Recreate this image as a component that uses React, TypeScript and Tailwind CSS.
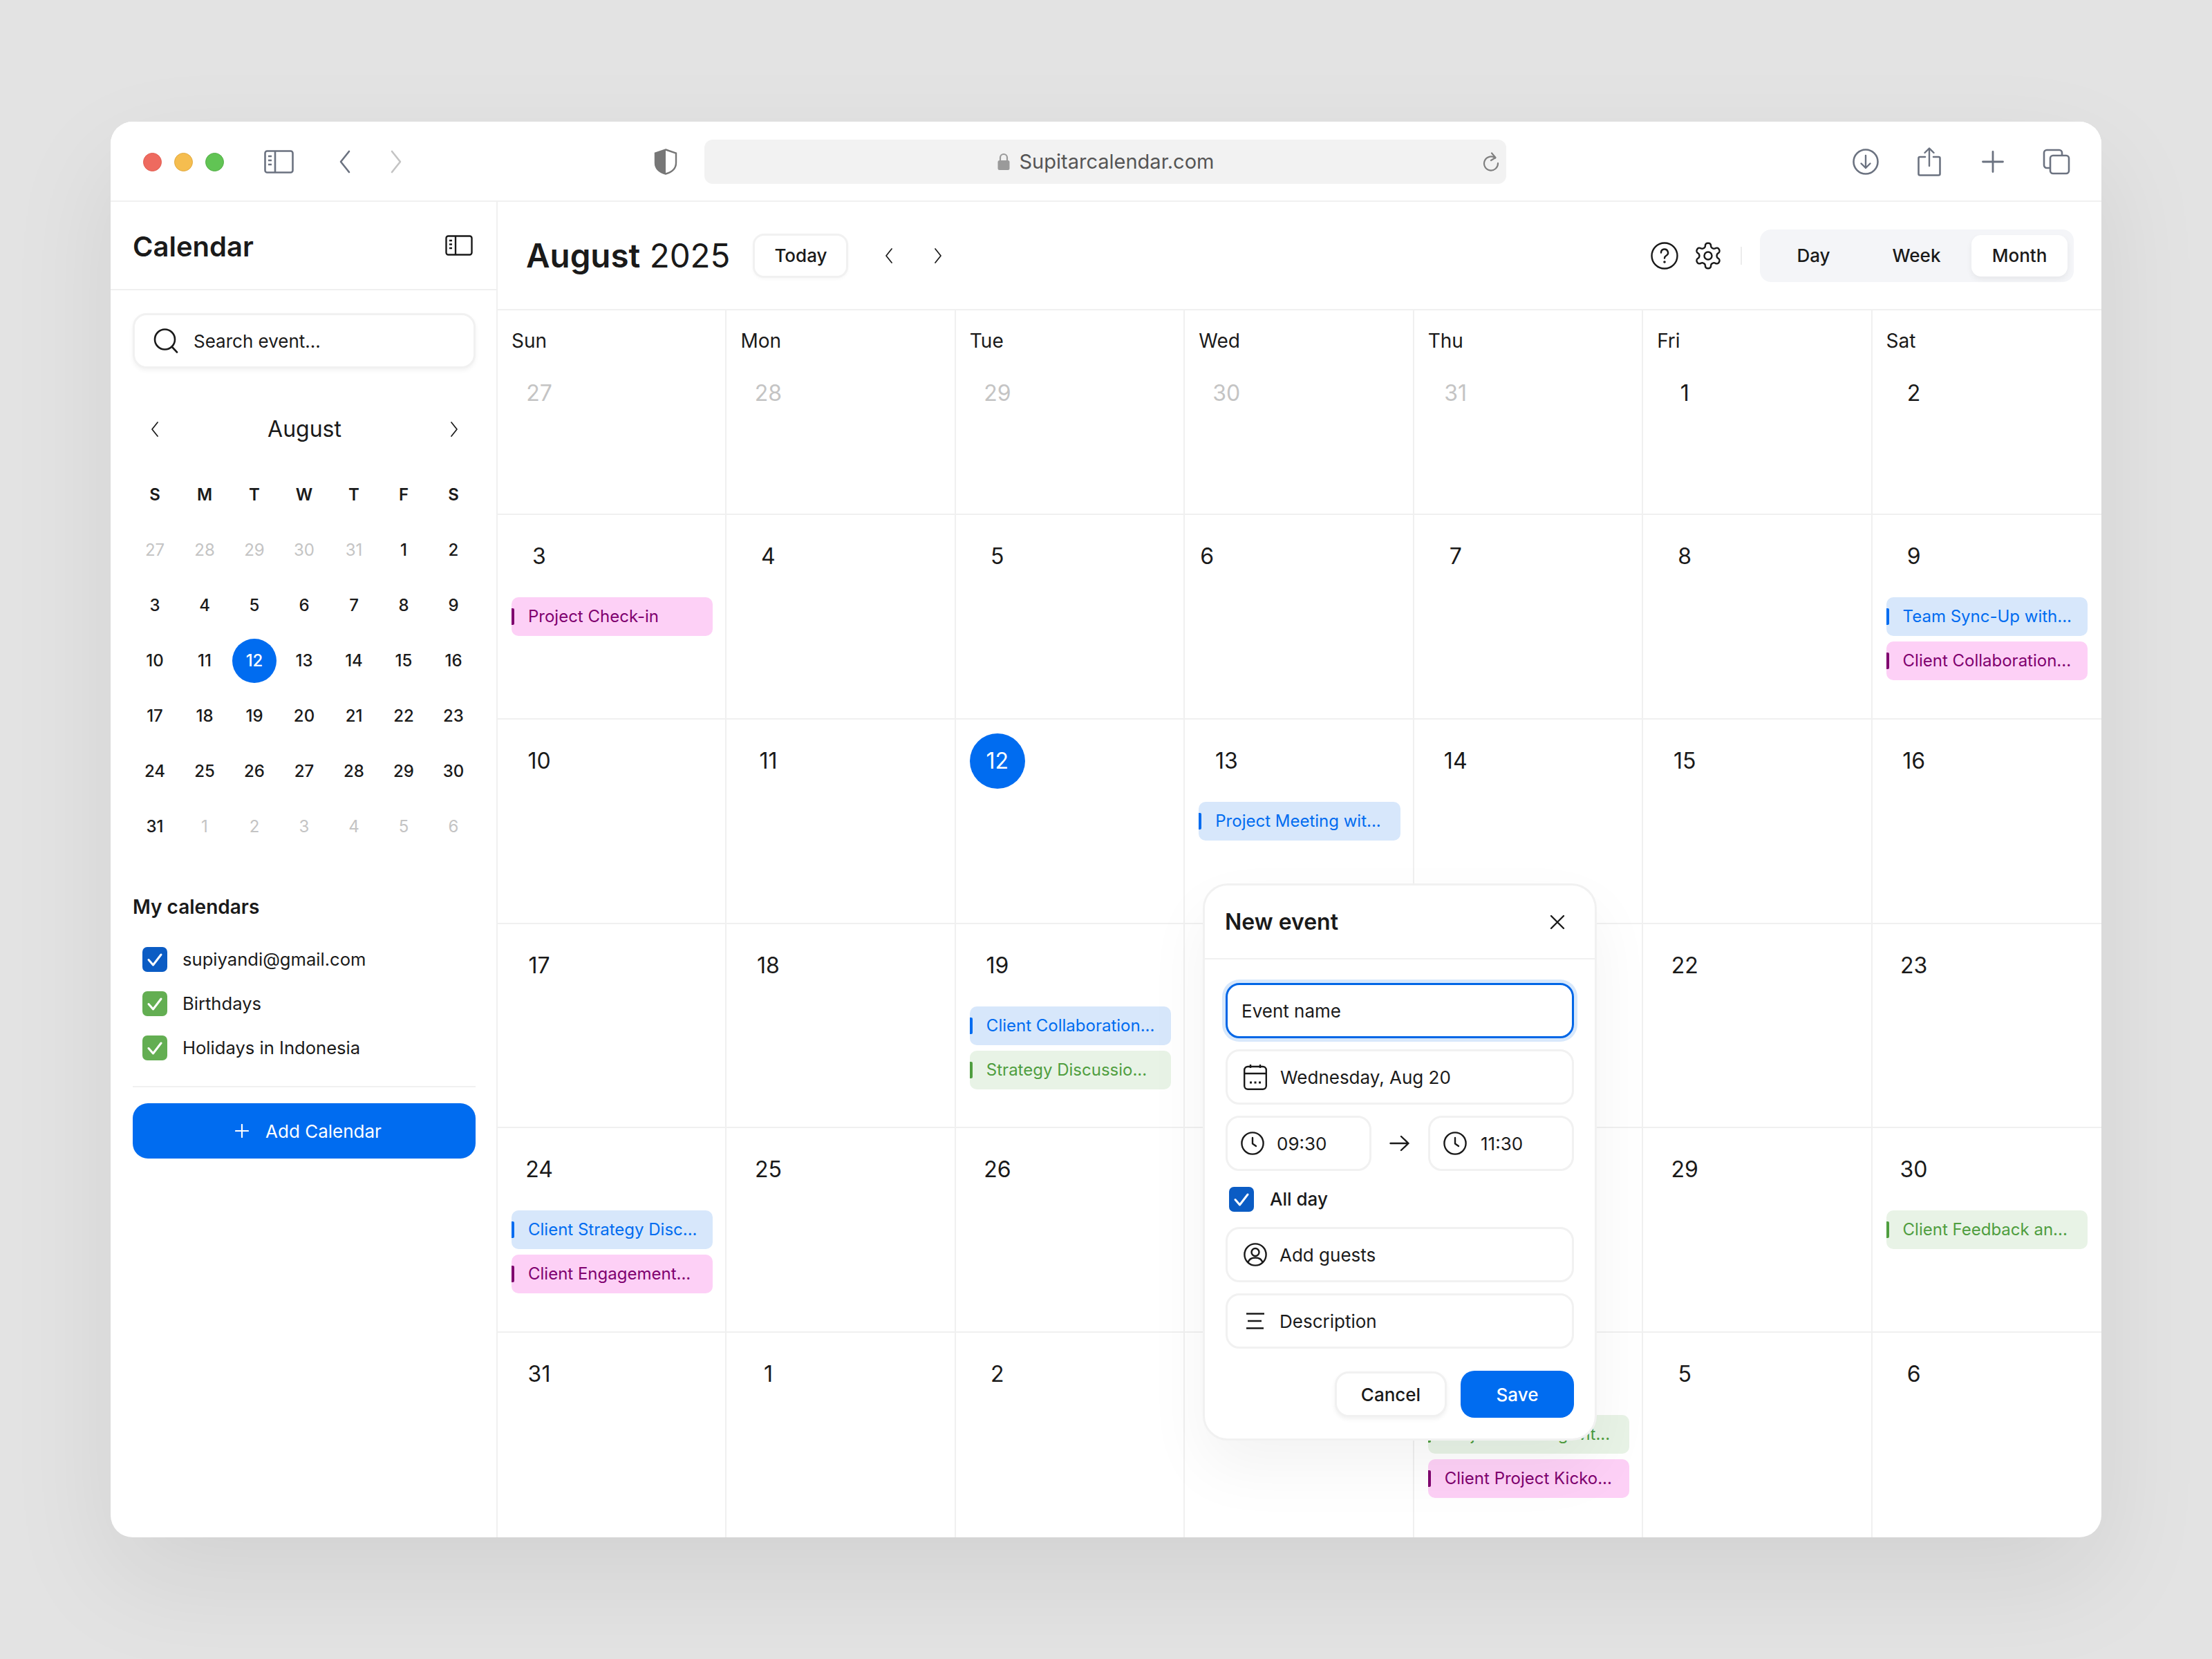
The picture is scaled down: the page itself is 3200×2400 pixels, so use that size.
import { ReactNode } from 'react';

type Tone = 'blue' | 'pink' | 'green';

interface Chip {
  label: string;
  tone: Tone;
}

interface Cell {
  day: number;
  muted?: boolean;
  today?: boolean;
  shift?: boolean;
  chips?: Chip[];
}

const toneClasses: Record<Tone, { box: string; bar: string }> = {
  blue: { box: 'bg-[#d7e7fb] text-[#006cf0]', bar: 'bg-[#006cf0]' },
  pink: { box: 'bg-[#fdd0f6] text-[#80006f]', bar: 'bg-[#80006f]' },
  green: { box: 'bg-[#e8f3e6] text-[#4f9e3f]', bar: 'bg-[#4f9e3f]' },
};

const weekdays = ['Sun', 'Mon', 'Tue', 'Wed', 'Thu', 'Fri', 'Sat'];

const cells: Cell[] = [
  { day: 27, muted: true },
  { day: 28, muted: true },
  { day: 29, muted: true },
  { day: 30, muted: true },
  { day: 31, muted: true },
  { day: 1 },
  { day: 2 },
  { day: 3, chips: [{ label: 'Project Check-in', tone: 'pink' }] },
  { day: 4 },
  { day: 5 },
  { day: 6, shift: true },
  { day: 7 },
  { day: 8 },
  {
    day: 9,
    chips: [
      { label: 'Team Sync-Up with...', tone: 'blue' },
      { label: 'Client Collaboration...', tone: 'pink' },
    ],
  },
  { day: 10 },
  { day: 11 },
  { day: 12, today: true },
  { day: 13, chips: [{ label: 'Project Meeting wit...', tone: 'blue' }] },
  { day: 14 },
  { day: 15 },
  { day: 16 },
  { day: 17 },
  { day: 18 },
  {
    day: 19,
    chips: [
      { label: 'Client Collaboration...', tone: 'blue' },
      { label: 'Strategy Discussio...', tone: 'green' },
    ],
  },
  { day: 20 },
  { day: 21 },
  { day: 22 },
  { day: 23 },
  {
    day: 24,
    chips: [
      { label: 'Client Strategy Disc...', tone: 'blue' },
      { label: 'Client Engagement...', tone: 'pink' },
    ],
  },
  { day: 25 },
  { day: 26 },
  { day: 27 },
  { day: 28 },
  { day: 29 },
  { day: 30, chips: [{ label: 'Client Feedback an...', tone: 'green' }] },
  { day: 31 },
  { day: 1 },
  { day: 2 },
  { day: 3 },
  {
    day: 4,
    chips: [
      { label: 'Project Meeting wit...', tone: 'green' },
      { label: 'Client Project Kicko...', tone: 'pink' },
    ],
  },
  { day: 5 },
  { day: 6 },
];

const miniHeads = ['S', 'M', 'T', 'W', 'T', 'F', 'S'];
const miniDays = [
  27, 28, 29, 30, 31, 1, 2, 3, 4, 5, 6, 7, 8, 9, 10, 11, 12, 13, 14, 15, 16, 17, 18, 19, 20, 21, 22, 23, 24, 25, 26, 27,
  28, 29, 30, 31, 1, 2, 3, 4, 5, 6,
];

function Chevron({ dir, className }: { dir: 'left' | 'right'; className: string }) {
  return (
    <svg viewBox="0 0 20 36" fill="none" className={className}>
      <path
        d={dir === 'left' ? 'M16 3 4 18l12 15' : 'M4 3l12 15L4 33'}
        stroke="currentColor"
        strokeWidth="2.6"
        strokeLinecap="round"
        strokeLinejoin="round"
      />
    </svg>
  );
}

function SidebarIcon({ className }: { className: string }) {
  return (
    <svg viewBox="0 0 40 30" fill="none" className={className}>
      <rect x="1.5" y="1.5" width="37" height="27" rx="3" stroke="currentColor" strokeWidth="2.4" />
      <path d="M15 1.5v27" stroke="currentColor" strokeWidth="2.4" />
      <path d="M6 8h4M6 13.5h4M6 19h4" stroke="currentColor" strokeWidth="2.6" />
    </svg>
  );
}

function Check() {
  return (
    <svg viewBox="0 0 36 36" fill="none" className="size-9">
      <path d="M9 18.5 15.5 26 27 11" stroke="white" strokeWidth="3" strokeLinecap="round" strokeLinejoin="round" />
    </svg>
  );
}

function Box({ color }: { color: string }) {
  return <span className={`size-9 shrink-0 rounded-[7px] ${color}`}><Check /></span>;
}

function ClockIcon() {
  return (
    <svg viewBox="0 0 34 34" fill="none" className="size-[34px] shrink-0">
      <circle cx="17" cy="17" r="15.6" stroke="#1a1a1a" strokeWidth="2.4" />
      <path d="M17 9v8.5l5 3.5" stroke="#1a1a1a" strokeWidth="2.4" strokeLinecap="round" strokeLinejoin="round" />
    </svg>
  );
}

function Field({ children, className = '' }: { children: ReactNode; className?: string }) {
  return (
    <div
      className={`flex h-20 items-center rounded-[20px] border-[3px] border-[#f1f1f1] bg-white text-[26px] text-[#1a1a1a] ${className}`}
    >
      {children}
    </div>
  );
}

function BrowserBar() {
  return (
    <div className="flex h-[116px] shrink-0 items-center border-b-2 border-[#f0f0f0] bg-white pt-[2px] text-[#6b7280]">
      <div className="ml-[47px] flex gap-[18px]">
        <span className="size-[27px] rounded-full border border-[#e25c50] bg-[#ee6a5f]" />
        <span className="size-[27px] rounded-full border border-[#e0a93f] bg-[#f5bd4f]" />
        <span className="size-[27px] rounded-full border border-[#53ae47] bg-[#61c454]" />
      </div>
      <svg viewBox="0 0 43 34" fill="none" className="ml-[58px] h-[34px] w-[43px]">
        <rect x="1.5" y="1.5" width="40" height="31" rx="3" stroke="#6b7280" strokeWidth="2.6" />
        <path d="M16 1.5v31" stroke="#6b7280" strokeWidth="2.6" />
        <path d="M6 9h5M6 15h5M6 21h5" stroke="#6b7280" strokeWidth="2.6" />
      </svg>
      <Chevron dir="left" className="ml-[64px] h-[36px] w-[20px]" />
      <Chevron dir="right" className="ml-[54px] h-[36px] w-[20px] text-[#c4c4c4]" />
      <svg viewBox="0 0 34 38" fill="none" className="ml-[363px] h-[38px] w-[34px]">
        <path d="M17 1.5 32 6.5v14c0 8-6 13.5-15 16-9-2.5-15-8-15-16v-14L17 1.5Z" stroke="#777" strokeWidth="2.4" />
        <path d="M17 1.5 2 6.5v14c0 8 6 13.5 15 16V1.5Z" fill="#777" />
      </svg>
      <div className="relative ml-[39px] flex h-16 w-[1160px] items-center justify-center rounded-[12px] bg-[#f2f2f2]">
        <svg viewBox="0 0 20 26" className="mr-[13px] h-[26px] w-5">
          <path d="M5 11V7a5 5 0 0 1 10 0v4" fill="none" stroke="#9a9a9a" strokeWidth="2.2" />
          <rect x="1.5" y="11" width="17" height="14" rx="2.5" fill="#9a9a9a" />
        </svg>
        <span className="text-[29px] text-[#555]">Supitarcalendar.com</span>
        <svg viewBox="0 0 24 28" fill="none" className="absolute right-[10px] h-7 w-6">
          <path d="M18 8.5A10 10 0 1 0 22 16" stroke="#808080" strokeWidth="2.2" strokeLinecap="round" />
          <path d="M13 1.5 18.5 8 12 12" stroke="#808080" strokeWidth="2.2" strokeLinecap="round" strokeLinejoin="round" />
        </svg>
      </div>
      <svg viewBox="0 0 38 38" fill="none" className="ml-[501px] size-[38px]">
        <circle cx="19" cy="19" r="17.5" stroke="#6b7280" strokeWidth="2.6" />
        <path d="M19 10v18M12.5 21.5 19 28l6.5-6.5" stroke="#6b7280" strokeWidth="2.4" strokeLinecap="round" strokeLinejoin="round" />
      </svg>
      <svg viewBox="0 0 34 42" fill="none" className="ml-[56px] h-[42px] w-[34px]">
        <path d="M11 14H3.5a2 2 0 0 0-2 2v22.5a2 2 0 0 0 2 2h27a2 2 0 0 0 2-2V16a2 2 0 0 0-2-2H23" stroke="#6b7280" strokeWidth="2.6" strokeLinecap="round" />
        <path d="M17 27V2M10.5 8 17 1.5 23.5 8" stroke="#6b7280" strokeWidth="2.4" strokeLinecap="round" strokeLinejoin="round" />
      </svg>
      <svg viewBox="0 0 32 32" fill="none" className="ml-[59px] size-8">
        <path d="M16 1.5v29M1.5 16h29" stroke="#6b7280" strokeWidth="2.8" strokeLinecap="round" />
      </svg>
      <svg viewBox="0 0 40 38" fill="none" className="ml-[56px] h-[38px] w-10">
        <path d="M10 28H6a4 4 0 0 1-4-4V6a4 4 0 0 1 4-4h18a4 4 0 0 1 4 4v4" stroke="#6b7280" strokeWidth="2.6" />
        <rect x="11" y="10" width="27" height="26" rx="4" stroke="#6b7280" strokeWidth="2.6" />
      </svg>
    </div>
  );
}

function Sidebar() {
  return (
    <aside className="flex w-[560px] shrink-0 flex-col border-r-2 border-[#f0f0f0] text-[#1a1a1a]">
      <div className="flex h-[128px] shrink-0 items-center justify-between border-b-2 border-[#f0f0f0] pl-8 pr-[34px]">
        <h1 className="mt-[3px] text-[40px] font-semibold">Calendar</h1>
        <SidebarIcon className="h-[30px] w-10 text-[#1a1a1a]" />
      </div>
      <div className="pl-8 pr-[30px] pt-[33px]">
        <div className="flex h-20 items-center rounded-[20px] border-[3px] border-[#f1f1f1] bg-white pl-[27px] shadow-[0_3px_6px_rgba(0,0,0,0.05)]">
          <svg viewBox="0 0 36 36" fill="none" className="size-9">
            <circle cx="16.5" cy="16" r="14.5" stroke="#1a1a1a" strokeWidth="2.6" />
            <path d="m27 27 7 7.5" stroke="#1a1a1a" strokeWidth="2.6" strokeLinecap="round" />
          </svg>
          <span className="ml-[22px] text-[26px]">Search event...</span>
        </div>
        <div className="mt-[56px] flex h-16 items-center justify-between pl-[25px] pr-6">
          <Chevron dir="left" className="h-[24px] w-[14px]" />
          <span className="text-[32px]">August</span>
          <Chevron dir="right" className="h-[24px] w-[14px]" />
        </div>
        <div className="-ml-1 mt-[23px] grid grid-cols-[repeat(7,72px)] auto-rows-[80px] items-center justify-items-center text-[24px]">
          {miniHeads.map((d, i) => (
            <span key={i} className="font-semibold">{d}</span>
          ))}
          {miniDays.map((d, i) => {
            const muted = i < 5 || i > 35;
            return (
              <span
                key={i}
                className={
                  i === 16
                    ? 'flex size-16 items-center justify-center rounded-full bg-[#006cf0] font-medium text-white'
                    : muted
                      ? 'text-[#c4c4c4]'
                      : 'font-medium'
                }
              >
                {d}
              </span>
            );
          })}
        </div>
        <h2 className="mt-[56px] text-[28px] font-semibold leading-10">My calendars</h2>
        <div className="mt-[38px] flex flex-col gap-7 pl-[14px] text-[25.6px] leading-9">
          <div className="flex items-center gap-[22px]"><Box color="bg-[#0b5cc4]" />supiyandi@gmail.com</div>
          <div className="flex items-center gap-[22px]"><Box color="bg-[#63ae52]" />Birthdays</div>
          <div className="flex items-center gap-[22px]"><Box color="bg-[#63ae52]" />Holidays in Indonesia</div>
        </div>
        <div className="mt-[37px] border-t-2 border-[#f0f0f0]" />
        <button className="mt-[23px] flex h-20 w-full items-center justify-center gap-[24px] rounded-[22px] bg-[#006cf0] pl-3 text-[26px] text-white">
          <svg viewBox="0 0 20 20" fill="none" className="size-5">
            <path d="M10 1v18M1 10h18" stroke="white" strokeWidth="2.2" strokeLinecap="round" />
          </svg>
          Add Calendar
        </button>
      </div>
    </aside>
  );
}

function MainHeader() {
  return (
    <div className="flex h-[157px] shrink-0 items-center border-b-2 border-[#f0f0f0] pl-[41px] pr-10 text-[#1a1a1a]">
      <h2 className="text-[47.5px] leading-none"><span className="font-semibold">August</span> <span className="font-normal">2025</span></h2>
      <button className="ml-[33px] h-16 w-[138px] rounded-[16px] border-[3px] border-[#f1f1f1] bg-white text-[26px] font-medium shadow-[0_2px_4px_rgba(0,0,0,0.03)]">Today</button>
      <Chevron dir="left" className="ml-[52px] h-[24px] w-[14px]" />
      <Chevron dir="right" className="ml-[57px] h-[24px] w-[14px]" />
      <svg viewBox="0 0 40 40" fill="none" className="ml-auto size-10">
        <circle cx="20" cy="20" r="18.5" stroke="#1a1a1a" strokeWidth="2.4" />
        <path d="M15 15.5a5 5 0 1 1 7.5 4.3c-1.7 1-2.5 2-2.5 3.7" stroke="#1a1a1a" strokeWidth="2.4" strokeLinecap="round" />
        <circle cx="20" cy="29" r="1.8" fill="#1a1a1a" />
      </svg>
      <svg viewBox="0 0 24 24" fill="none" className="ml-[21px] size-11" stroke="#1a1a1a" strokeWidth="1.35" strokeLinecap="round" strokeLinejoin="round">
        <path d="M12.22 2h-.44a2 2 0 0 0-2 2v.18a2 2 0 0 1-1 1.73l-.43.25a2 2 0 0 1-2 0l-.15-.08a2 2 0 0 0-2.73.73l-.22.38a2 2 0 0 0 .73 2.73l.15.1a2 2 0 0 1 1 1.72v.51a2 2 0 0 1-1 1.74l-.15.09a2 2 0 0 0-.73 2.73l.22.38a2 2 0 0 0 2.73.73l.15-.08a2 2 0 0 1 2 0l.43.25a2 2 0 0 1 1 1.73V20a2 2 0 0 0 2 2h.44a2 2 0 0 0 2-2v-.18a2 2 0 0 1 1-1.73l.43-.25a2 2 0 0 1 2 0l.15.08a2 2 0 0 0 2.73-.73l.22-.39a2 2 0 0 0-.73-2.73l-.15-.08a2 2 0 0 1-1-1.74v-.5a2 2 0 0 1 1-1.74l.15-.09a2 2 0 0 0 .73-2.73l-.22-.38a2 2 0 0 0-2.73-.73l-.15.08a2 2 0 0 1-2 0l-.43-.25a2 2 0 0 1-1-1.73V4a2 2 0 0 0-2-2z" />
        <circle cx="12" cy="12" r="3" />
      </svg>
      <span className="ml-[25px] h-[26px] w-0.5 bg-[#ececec]" />
      <div className="ml-[26px] flex h-[76px] items-center gap-[10px] rounded-[16px] bg-[#f4f5f8] pl-2 pr-[9px] text-[26px] font-medium">
        <span className="flex h-[60px] w-[139px] items-center justify-center">Day</span>
        <span className="flex h-[60px] w-[139px] items-center justify-center">Week</span>
        <span className="flex h-[60px] w-[139px] items-center justify-center rounded-[14px] bg-white shadow-[0_4px_8px_rgba(0,0,0,0.06)]">Month</span>
      </div>
    </div>
  );
}

function MonthGrid() {
  return (
    <div className="grid flex-1 grid-cols-7 grid-rows-6 text-[#1a1a1a]">
      {cells.map((cell, i) => (
        <div
          key={i}
          className={`min-w-0 border-[#f0f0f0] pl-5 ${i % 7 < 6 ? 'border-r-2 pr-[18px]' : 'pr-5'} ${i < 35 ? 'border-b-2' : ''} ${i < 7 ? 'pt-6' : 'pt-[20px]'}`}
        >
          {i < 7 && <div className="mb-4 h-10 text-[28px] leading-10">{weekdays[i]}</div>}
          <div
            className={`flex size-20 items-center justify-center rounded-full text-[32px] ${
              cell.today ? 'bg-[#006cf0] text-white' : cell.muted ? 'text-[#c4c4c4]' : ''
            } ${cell.shift ? '-translate-x-7' : ''}`}
          >
            {cell.day}
          </div>
          {cell.chips && (
            <div className="mt-[19px] flex flex-col gap-2">
              {cell.chips.map((chip) => (
                <div
                  key={chip.label}
                  className={`flex h-14 items-center overflow-hidden whitespace-nowrap rounded-[10px] text-[24px] ${toneClasses[chip.tone].box}`}
                >
                  <span className={`h-6 w-1 shrink-0 rounded-r-[2px] ${toneClasses[chip.tone].bar}`} />
                  <span className="ml-5">{chip.label}</span>
                </div>
              ))}
            </div>
          )}
        </div>
      ))}
    </div>
  );
}

function NewEventPopup() {
  return (
    <div className="absolute left-[1580px] top-[1102px] w-[570px] rounded-[36px] border-[3px] border-[#f1f1f1] bg-white text-[#1a1a1a] shadow-[0_40px_90px_rgba(0,0,0,0.05)]">
      <div className="flex h-[107px] items-center justify-between border-b-2 border-[#f0f0f0] pl-[29px] pr-[43px]">
        <span className="text-[32px] font-semibold">New event</span>
        <svg viewBox="0 0 22 22" fill="none" className="size-[22px]">
          <path d="M2 2l18 18M20 2 2 20" stroke="#1a1a1a" strokeWidth="2.4" strokeLinecap="round" />
        </svg>
      </div>
      <div className="flex flex-col gap-4 px-[30px] pt-[34px]">
        <div className="flex h-20 items-center rounded-[20px] border-[3px] border-[#0066e6] pl-5 text-[26px] shadow-[0_0_0_5px_#d8e8fb]">
          Event name
        </div>
        <Field className="pl-[23px]">
          <svg viewBox="0 0 34 38" fill="none" className="h-[38px] w-[34px] shrink-0">
            <rect x="1.2" y="4" width="31.6" height="32.8" rx="5" stroke="#1a1a1a" strokeWidth="2.4" />
            <path d="M1.5 14h31M10 1v5M24 1v5" stroke="#1a1a1a" strokeWidth="2.4" />
            <path d="M9 27h3M15.5 27h3M22 27h3" stroke="#1a1a1a" strokeWidth="3" />
          </svg>
          <span className="ml-[19px]">Wednesday, Aug 20</span>
        </Field>
        <div className="flex items-center justify-between">
          <Field className="w-[211px] pl-[19px]">
            <ClockIcon />
            <span className="ml-[18px]">09:30</span>
          </Field>
          <svg viewBox="0 0 30 24" fill="none" className="h-6 w-[30px]">
            <path d="M1.5 12h26M17 2l10.5 10L17 22" stroke="#1a1a1a" strokeWidth="2.4" strokeLinecap="round" strokeLinejoin="round" />
          </svg>
          <Field className="w-[211px] pl-[19px]">
            <ClockIcon />
            <span className="ml-5">11:30</span>
          </Field>
        </div>
        <div className="flex items-center gap-[23px] py-[5px] pl-[5px] text-[26px] font-medium">
          <Box color="bg-[#0b5cc4]" />
          All day
        </div>
        <Field className="pl-[23px]">
          <svg viewBox="0 0 34 34" fill="none" className="size-[34px] shrink-0">
            <circle cx="17" cy="17" r="15.6" stroke="#1a1a1a" strokeWidth="2.4" />
            <circle cx="17" cy="13.5" r="5.5" stroke="#1a1a1a" strokeWidth="2.4" />
            <path d="M6.5 28c1.5-4.5 5.5-6.5 10.5-6.5S26 23.5 27.5 28" stroke="#1a1a1a" strokeWidth="2.4" />
          </svg>
          <span className="ml-[18px]">Add guests</span>
        </Field>
        <Field className="pl-[27px]">
          <svg viewBox="0 0 26 24" fill="none" className="h-6 w-[26px] shrink-0">
            <path d="M0 1.5h26M2 12h20M0 22.5h25" stroke="#1a1a1a" strokeWidth="2.6" />
          </svg>
          <span className="ml-[22px]">Description</span>
        </Field>
        <div className="mb-[30px] mt-4 flex items-center justify-end gap-5 text-[26px] font-medium">
          <button className="h-[66px] w-[162px] rounded-[20px] border-[3px] border-[#f1f1f1] bg-white shadow-[0_3px_6px_rgba(0,0,0,0.06)]">Cancel</button>
          <button className="h-[68px] w-[164px] rounded-[20px] bg-[#006cf0] text-white">Save</button>
        </div>
      </div>
    </div>
  );
}

export default function App() {
  return (
    <div className="h-[2400px] w-[3200px] overflow-hidden bg-[#e3e3e3] pl-[160px] pt-[176px] [font-family:Inter,sans-serif]">
      <div className="relative flex h-[2048px] w-[2880px] flex-col overflow-hidden rounded-[32px] bg-white shadow-[0_60px_160px_rgba(0,0,0,0.08)]">
        <BrowserBar />
        <div className="flex min-h-0 flex-1">
          <Sidebar />
          <div className="flex min-w-0 flex-1 flex-col">
            <MainHeader />
            <MonthGrid />
          </div>
        </div>
        <NewEventPopup />
      </div>
    </div>
  );
}
